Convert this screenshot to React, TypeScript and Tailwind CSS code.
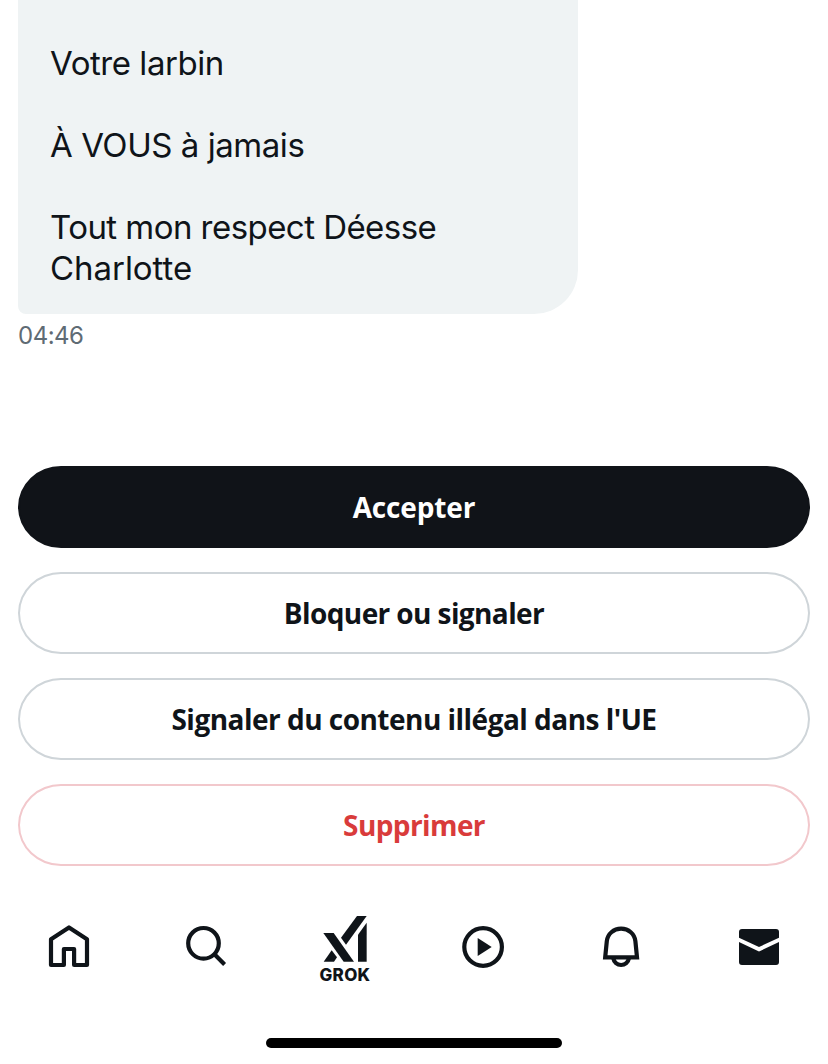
import { ReactNode } from "react";
import clsx from "clsx";

const messages = [
    [{ text: "Votre larbin", className: "tracking-[-0.45px]" }],
    [{ text: "À VOUS à jamais", className: "tracking-[-0.45px]" }],
    [
        { text: "Tout mon respect Déesse", className: "tracking-[-0.55px]" },
        { text: "Charlotte", className: "tracking-[-0.05px]" },
    ],
];

const actions = [
    { label: "Accepter", className: "border-[#101318] bg-[#101318] text-white tracking-[-0.15px]" },
    { label: "Bloquer ou signaler", className: "border-[#cfd5d9] text-[#0f1419] tracking-[-0.6px]" },
    {
        label: "Signaler du contenu illégal dans l'UE",
        className: "border-[#cfd5d9] text-[#0f1419] tracking-[-0.52px]",
    },
    { label: "Supprimer", className: "border-[#f2c8cc] text-[#d93b3b] tracking-[-0.6px]" },
];

function Icon({ children }: { children: ReactNode }) {
    return (
        <svg viewBox="0 0 48 48" className="h-12 w-12" fill="none" stroke="currentColor" strokeWidth="4.2">
            {children}
        </svg>
    );
}

function GrokIcon() {
    return (
        <div className="flex flex-col items-center">
            <svg viewBox="69 47 132 138" className="mt-[7px] h-[46px] w-[44px]" fill="currentColor">
                <path d="M70 98h31l61 86h-31z" />
                <path d="M95 150l16 21-9 13H71z" />
                <path d="M171 47h29l-62 86-15-21z" />
                <path d="M200 67v117h-26v-81z" />
            </svg>
            <span className="mt-[3px] text-[17px] leading-[20px] font-extrabold tracking-[0.3px]">GROK</span>
        </div>
    );
}

export default function App() {
    return (
        <div className="flex h-[1064px] w-[828px] flex-col overflow-hidden bg-white font-['Inter',sans-serif] text-[#0f1419]">
            <div className="px-[18px]">
                <div className="flex h-[314px] w-[560px] flex-col gap-[41px] rounded-br-[44px] rounded-bl-[8px] bg-[#eff3f4] px-8 pt-[43px] text-[33px] leading-[41px]">
                    {messages.map((lines) => (
                        <p key={lines[0].text}>
                            {lines.map((line) => (
                                <span key={line.text} className={clsx("block", line.className)}>
                                    {line.text}
                                </span>
                            ))}
                        </p>
                    ))}
                </div>
                <div className="mt-[7px] text-[24px] leading-[30px] tracking-[-0.5px] text-[#5f6b74]">04:46</div>
            </div>

            <div className="mt-[115px] flex flex-col gap-6 px-[18px]">
                {actions.map((a) => (
                    <button
                        key={a.label}
                        className={clsx(
                            "h-[82px] rounded-[43px/41px] border-2 font-['Open_Sans',sans-serif] text-[28px] leading-[40px] font-bold",
                            a.className
                        )}
                    >
                        {a.label}
                    </button>
                ))}
            </div>

            <nav className="mt-[43px] grid h-20 grid-cols-6 justify-items-center">
                <div className="pt-[14px]">
                    <Icon>
                        <path d="M6 42h12.9V26h10.2v16H42V16.2L24 4.4 6 16.2z" strokeLinejoin="round" />
                    </Icon>
                </div>
                <div className="pt-[14px]">
                    <Icon>
                        <circle cx="20.5" cy="20.3" r="15.3" />
                        <path d="M31.2 31l10.4 10.4" />
                    </Icon>
                </div>
                <GrokIcon />
                <div className="pt-[14px]">
                    <Icon>
                        <circle cx="24.1" cy="24" r="18.8" />
                        <path d="M18.7 15v18l14-9z" fill="currentColor" stroke="none" />
                    </Icon>
                </div>
                <div className="pt-[14px]">
                    <Icon>
                        <path d="M8.2 34.3L9.8 18.2C10.5 11 16.6 5.7 24.1 5.7S37.7 11 38.4 18.2L40 34.3z" />
                        <path d="M16.2 35c.8 4.2 4.1 7 7.9 7s7.1-2.8 7.9-7" />
                    </Icon>
                </div>
                <div className="pt-[14px]">
                    <Icon>
                        <g fill="currentColor" stroke="none">
                            <path d="M4 14.7V9a3 3 0 0 1 3-3h34a3 3 0 0 1 3 3v5.7L24 24z" />
                            <path d="M4 19.1l20 9.4 20-9.4V39a3 3 0 0 1-3 3H7a3 3 0 0 1-3-3z" />
                        </g>
                    </Icon>
                </div>
            </nav>

            <div className="mt-[49px] h-[10px] w-[296px] self-center rounded-full bg-black" />
        </div>
    );
}
